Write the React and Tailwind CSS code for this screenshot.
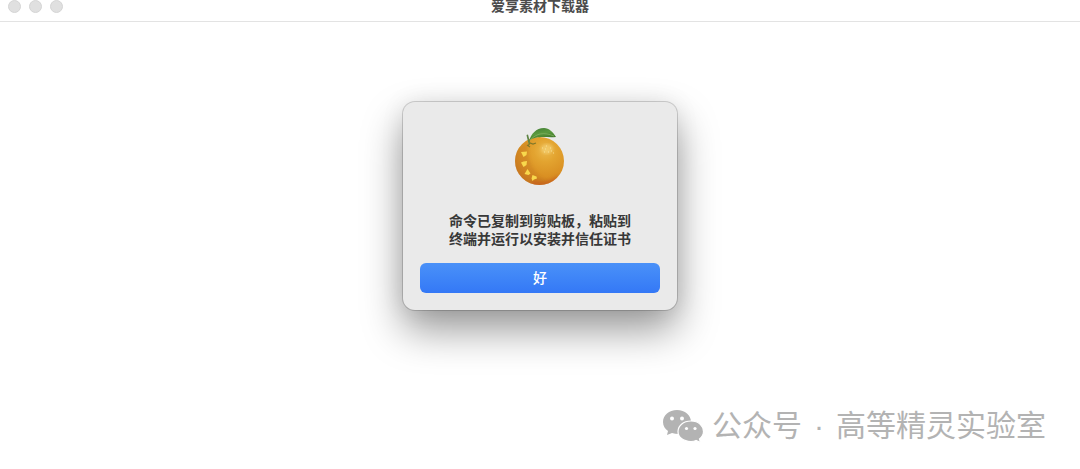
const WINDOW_TITLE = "爱享素材下载器";
const MESSAGE = ["命令已复制到剪贴板，粘贴到", "终端并运行以安装并信任证书"];
const WINDOW_BUTTONS = ["关闭", "最小化", "缩放"];

function OrangeIcon() {
  return (
    <svg viewBox="0 0 64 64" className="size-16" aria-hidden="true">
      <defs>
        <radialGradient id="peel" cx="0.62" cy="0.28" r="0.78">
          <stop offset="0" stopColor="#ecb94c" />
          <stop offset="0.3" stopColor="#e3a430" />
          <stop offset="0.7" stopColor="#d98f22" />
          <stop offset="1" stopColor="#c4701e" />
        </radialGradient>
        <linearGradient id="leaf" x1="0" y1="0" x2="0.4" y2="1">
          <stop offset="0" stopColor="#3f7a35" />
          <stop offset="0.5" stopColor="#5b9a3e" />
          <stop offset="1" stopColor="#3d7527" />
        </linearGradient>
        <filter id="soft">
          <feGaussianBlur stdDeviation="1.4" />
        </filter>
        <clipPath id="fruit">
          <ellipse cx="31.5" cy="37" rx="24.5" ry="24" />
        </clipPath>
      </defs>
      <ellipse cx="31.5" cy="37" rx="24.5" ry="24" fill="url(#peel)" />
      <g clipPath="url(#fruit)">
        <path
          d="M21 17C17 33 24 51 43 60L30 65L4 57L3 29Z"
          fill="#c47a20"
          opacity="0.38"
          filter="url(#soft)"
        />
        <path
          d="M25 56Q39 61 50 51L46 64H22Z"
          fill="#c7561d"
          opacity="0.5"
          filter="url(#soft)"
        />
        <ellipse
          cx="39"
          cy="25"
          rx="6"
          ry="5"
          fill="#f7d77f"
          opacity="0.55"
          filter="url(#soft)"
        />
        <path
          d="M34 24h1M38 22h1M42 24h1M36 28h1M40 28h1M45 29h1M37 25h1M43 27h1"
          stroke="#fae6a3"
          strokeWidth="1"
          opacity="0.8"
        />
      </g>
      <g fill="#f8d84c">
        <path d="M13 28L19 27.500L18.500 31L15.500 33Z" />
        <path d="M13 38.500L15.500 37.500L19 37L18.500 41L15.500 43Z" />
        <path d="M16.500 50L19.500 45L22.500 49.500L20.500 51Z" />
        <path d="M23.500 54.500L24.500 51L28.500 52.500L29 54.500L26 55.500L24.500 57Z" />
      </g>
      <path
        d="M20 22l2-3 3 1 3-1M19 21l3 2"
        fill="none"
        stroke="#80782a"
        strokeWidth="1.2"
      />
      <path
        d="M21 21C20 17 19 14 18.500 11L20 10.500L22 18Z"
        fill="#5f8544"
      />
      <path
        d="M21 17C23 10 28 4 36 4C41 4 45 8 48 13C39 14 28 11 21 17Z"
        fill="url(#leaf)"
      />
      <path
        d="M22 16C29 9 36 8 46 12"
        fill="none"
        stroke="#8ab568"
        strokeWidth="0.7"
      />
    </svg>
  );
}

function WeChatIcon() {
  return (
    <svg viewBox="0 0 42 34" className="h-[34px] w-[42px]" aria-hidden="true">
      <path
        d="M15 1C7 1 1 6 1 13C1 17 3 20 6 22L5 26L10 24Q13 25 17 25C24 25 29 19 29 13C29 6 23 1 15 1Z"
        fill="#b3b3b3"
      />
      <path
        d="M29 12C21 12 16 17 16 22.500C16 28 21 32.500 29 32.500Q32 32.500 34 31.500L38.500 33.500L37.500 30C40 28 41.500 25 41.500 22.500C41.500 17 37 12 29 12Z"
        fill="#b3b3b3"
        stroke="#fff"
        strokeWidth="1.2"
      />
      <g fill="#fff">
        <circle cx="10" cy="9.500" r="2" />
        <circle cx="20" cy="9.500" r="2" />
        <circle cx="24.500" cy="19.500" r="1.600" />
        <circle cx="33" cy="19.500" r="1.600" />
      </g>
    </svg>
  );
}

export default function App() {
  return (
    <div className="flex min-h-screen flex-col bg-white font-['Liberation_Sans','Noto_Sans_CJK_SC',sans-serif]">
      {/* Title bar */}
      <header className="grid grid-cols-[1fr_auto_1fr] items-center border-b border-[#e3e3e3] pb-[9px]">
        <div className="flex gap-2 pl-2">
          {WINDOW_BUTTONS.map((label) => (
            <button
              key={label}
              type="button"
              aria-label={label}
              className="-my-px size-[13px] rounded-full border border-[#d5d5d5] bg-[#e0e0e0]"
            />
          ))}
        </div>
        <h1 className="text-sm leading-3 font-bold text-[#4c4c4c]">
          {WINDOW_TITLE}
        </h1>
      </header>

      {/* Alert */}
      <main className="flex flex-1 items-start justify-center pt-20">
        <div
          role="alertdialog"
          aria-labelledby="alert-message"
          className="flex w-[274px] flex-col items-center rounded-xl bg-[#eaeaea] px-[17px] pt-[22px] pb-[17px] shadow-[0_0_0_1px_rgba(0,0,0,0.16),0_0_24px_rgba(0,0,0,0.08),0_20px_40px_rgba(0,0,0,0.4)]"
        >
          <OrangeIcon />
          <p
            id="alert-message"
            className="mt-6 text-center text-sm leading-[18px] font-bold text-[#383838]"
          >
            {MESSAGE[0]}
            <br />
            {MESSAGE[1]}
          </p>
          <button
            type="button"
            className="mt-[15px] h-[30px] w-full rounded-md bg-linear-to-b from-[#4a91f8] to-[#3478f6] text-sm font-medium text-white"
          >
            好
          </button>
        </div>
      </main>

      {/* Account name */}
      <footer className="flex items-center justify-end gap-2 pr-[34px] pb-5 text-[#b3b3b3]">
        <WeChatIcon />
        <p className="flex gap-3 text-[30px] leading-[46px]">
          <span>公众号</span>
          <span>·</span>
          <span>高等精灵实验室</span>
        </p>
      </footer>
    </div>
  );
}
